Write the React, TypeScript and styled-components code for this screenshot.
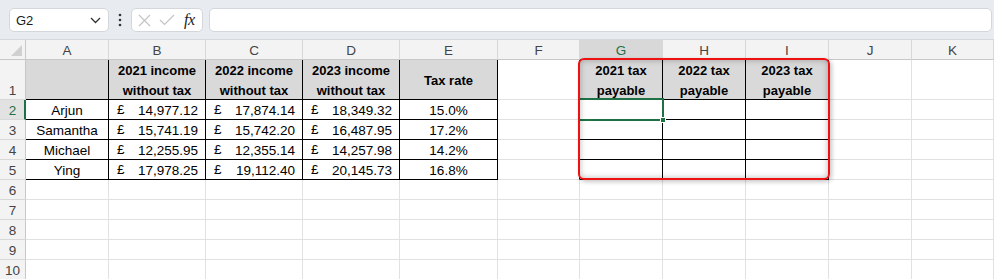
import React from 'react';
import styled, { createGlobalStyle } from 'styled-components';

const GlobalStyle = createGlobalStyle`
  html, body { margin: 0; padding: 0; background: #ffffff; }
  body { font-family: "Liberation Sans", Arial, sans-serif; overflow: hidden; }
  * { box-sizing: border-box; }
`;

const GREEN = '#1e7145';
const GRID = '#e1e1e1';
const BLACK = '#000000';

const Page = styled.div`
  width: 994px;
  height: 279px;
  overflow: hidden;
  display: flex;
  flex-direction: column;
`;

const Toolbar = styled.div`
  height: 40px;
  flex: none;
  background: #e8ecf0;
  border-bottom: 1px solid #d6d9dc;
  display: flex;
  align-items: flex-start;
  padding: 8px 2px 0 9px;
`;

const NameBox = styled.div`
  width: 100px;
  height: 24px;
  background: #ffffff;
  border: 1px solid #d3d7db;
  border-radius: 5px;
  display: flex;
  align-items: center;
  justify-content: space-between;
  padding: 0 7px 0 6px;
  font-size: 13px;
  color: #1a1a1a;
`;

const Dots = styled.div`
  width: 22px;
  height: 24px;
  display: flex;
  align-items: center;
  justify-content: center;
`;

const FxBox = styled.div`
  width: 72px;
  height: 24px;
  background: #ffffff;
  border: 1px solid #d3d7db;
  border-radius: 5px;
  display: flex;
  align-items: center;
  padding: 0 4px 0 6px;
  gap: 8px;
`;

const FxText = styled.span`
  font-family: "Liberation Serif", "Times New Roman", serif;
  font-style: italic;
  font-size: 16px;
  color: #222;
  letter-spacing: -0.5px;
  margin-left: 1px;
`;

const FormulaInput = styled.div`
  flex: 1;
  margin-left: 6px;
  height: 24px;
  background: #ffffff;
  border: 1px solid #d3d7db;
  border-radius: 5px;
`;

const SheetWrap = styled.div`
  position: relative;
  flex: 1;
`;

const Sheet = styled.div`
  display: grid;
  grid-template-columns: 26px 83px 97px 97px 97px 98px 82px 83px 83px 83px 83px 82px;
  grid-template-rows: 20px 40px repeat(9, 20px);
`;

const Corner = styled.div`
  background: #f3f3f3;
  border-right: 1px solid #c8c8c8;
  border-bottom: 1px solid #c8c8c8;
  position: relative;
`;

const CornerTriangle = styled.div`
  position: absolute;
  right: 3px;
  bottom: 3px;
  width: 0;
  height: 0;
  border-left: 11px solid transparent;
  border-bottom: 11px solid #d0d0d0;
`;

const ColHead = styled.div<{ $sel?: boolean }>`
  background: ${p => (p.$sel ? '#d8d8d8' : '#f3f3f3')};
  border-right: 1px solid #d8d8d8;
  border-bottom: 1px solid ${p => (p.$sel ? GREEN : '#c8c8c8')};
  color: ${p => (p.$sel ? GREEN : '#444')};
  font-size: 13.5px;
  display: flex;
  align-items: center;
  justify-content: center;
  padding-top: 1px;
`;

const RowHead = styled.div<{ $sel?: boolean; $bottomAlign?: boolean }>`
  background: ${p => (p.$sel ? '#e2e2e2' : '#f3f3f3')};
  border-bottom: 1px solid #d8d8d8;
  border-right: ${p => (p.$sel ? `2px solid ${GREEN}` : '1px solid #c8c8c8')};
  color: ${p => (p.$sel ? GREEN : '#444')};
  font-size: 13.5px;
  display: flex;
  align-items: ${p => (p.$bottomAlign ? 'flex-end' : 'center')};
  justify-content: center;
  padding-top: ${p => (p.$bottomAlign ? '0' : '2px')};
  padding-bottom: ${p => (p.$bottomAlign ? '1px' : '0')};
  padding-left: ${p => (p.$sel ? '1px' : '0')};
`;

const Cell = styled.div<{
  $right: string;
  $bottom: string;
  $bg?: string;
  $bold?: boolean;
}>`
  position: relative;
  background: ${p => p.$bg || '#ffffff'};
  border-right: 1px solid ${p => p.$right};
  border-bottom: 1px solid ${p => p.$bottom};
  font-size: ${p => (p.$bold ? '13px' : '13.5px')};
  font-weight: ${p => (p.$bold ? 700 : 400)};
  color: #000;
  display: flex;
  flex-direction: column;
  align-items: center;
  justify-content: center;
  text-align: center;
  line-height: 20px;
  padding-top: 2px;
  white-space: nowrap;
`;

const Money = styled.div`
  width: 100%;
  display: flex;
  justify-content: space-between;
  padding: 0 7px 0 8px;
`;

const Pound = styled.span`
  position: relative;
  top: -1px;
`;

const Selection = styled.div`
  position: absolute;
  left: -2px;
  top: -2px;
  right: -2px;
  bottom: -2px;
  border: 2px solid ${GREEN};
  pointer-events: none;
  z-index: 2;
`;

const FillHandle = styled.div`
  position: absolute;
  right: -4px;
  bottom: -4px;
  width: 6px;
  height: 6px;
  background: ${GREEN};
  border: 1px solid #ffffff;
`;

const Highlight = styled.div`
  position: absolute;
  left: 578px;
  top: 18px;
  width: 252px;
  height: 122px;
  border: 2px solid #ee1111;
  border-radius: 6px;
  box-shadow: 2px 2px 4px rgba(0, 0, 0, 0.22), inset 0 0 6px rgba(0, 0, 0, 0.28);
  pointer-events: none;
  z-index: 3;
`;

const COLS = ['A', 'B', 'C', 'D', 'E', 'F', 'G', 'H', 'I', 'J', 'K'];

type Val = string | { money: string } | string[] | null;

const DATA: Record<number, Val[]> = {
  1: [
    '',
    ['2021 income', 'without tax'],
    ['2022 income', 'without tax'],
    ['2023 income', 'without tax'],
    'Tax rate',
    null,
    ['2021 tax', 'payable'],
    ['2022 tax', 'payable'],
    ['2023 tax', 'payable'],
  ],
  2: ['Arjun', { money: '14,977.12' }, { money: '17,874.14' }, { money: '18,349.32' }, '15.0%'],
  3: ['Samantha', { money: '15,741.19' }, { money: '15,742.20' }, { money: '16,487.95' }, '17.2%'],
  4: ['Michael', { money: '12,255.95' }, { money: '12,355.14' }, { money: '14,257.98' }, '14.2%'],
  5: ['Ying', { money: '17,978.25' }, { money: '19,112.40' }, { money: '20,145.73' }, '16.8%'],
};

function ChevronDown() {
  return (
    <svg width="11" height="7" viewBox="0 0 11 7">
      <path d="M1 1 L5.5 5.5 L10 1" fill="none" stroke="#333" strokeWidth="1.3" />
    </svg>
  );
}

function VDots() {
  return (
    <svg width="4" height="14" viewBox="0 0 4 14">
      <circle cx="2" cy="2" r="1.3" fill="#333" />
      <circle cx="2" cy="7" r="1.3" fill="#333" />
      <circle cx="2" cy="12" r="1.3" fill="#333" />
    </svg>
  );
}

function CancelIcon() {
  return (
    <svg width="13" height="13" viewBox="0 0 13 13">
      <path d="M1 1 L12 12 M12 1 L1 12" stroke="#c4c4c4" strokeWidth="1.2" fill="none" />
    </svg>
  );
}

function CheckIcon() {
  return (
    <svg width="16" height="12" viewBox="0 0 16 12">
      <path d="M1 6 L5.5 10.5 L15 1" stroke="#c4c4c4" strokeWidth="1.2" fill="none" />
    </svg>
  );
}

function renderValue(v: Val) {
  if (v === null || v === '') return null;
  if (typeof v === 'string') return <span>{v}</span>;
  if (Array.isArray(v)) return v.map((line, i) => <span key={i}>{line}</span>);
  return (
    <Money>
      <Pound>£</Pound>
      <span>{v.money}</span>
    </Money>
  );
}

export default function App() {
  const rows = [1, 2, 3, 4, 5, 6, 7, 8, 9, 10];
  return (
    <Page>
      <GlobalStyle />
      <Toolbar>
        <NameBox>
          <span>G2</span>
          <ChevronDown />
        </NameBox>
        <Dots>
          <VDots />
        </Dots>
        <FxBox>
          <CancelIcon />
          <CheckIcon />
          <FxText>fx</FxText>
        </FxBox>
        <FormulaInput />
      </Toolbar>
      <SheetWrap>
        <Sheet>
          <Corner>
            <CornerTriangle />
          </Corner>
          {COLS.map(c => (
            <ColHead key={c} $sel={c === 'G'}>
              {c}
            </ColHead>
          ))}
          {rows.map(r => (
            <React.Fragment key={r}>
              <RowHead $sel={r === 2} $bottomAlign={r === 1}>
                {r}
              </RowHead>
              {COLS.map((c, ci) => {
                const inT1 = r <= 5 && ci <= 4;
                const inT2 = r <= 5 && ci >= 6 && ci <= 8;
                const leftOfT2 = r <= 5 && ci === 5;
                const right = inT1 || inT2 || leftOfT2 ? BLACK : GRID;
                const bottom = inT1 || inT2 ? BLACK : GRID;
                const header = r === 1 && (inT1 || inT2);
                const v = (DATA[r] && DATA[r][ci]) ?? null;
                return (
                  <Cell
                    key={c}
                    $right={right}
                    $bottom={bottom}
                    $bg={header ? '#d9d9d9' : undefined}
                    $bold={header}
                  >
                    {renderValue(v)}
                    {r === 2 && c === 'G' && (
                      <Selection>
                        <FillHandle />
                      </Selection>
                    )}
                  </Cell>
                );
              })}
            </React.Fragment>
          ))}
        </Sheet>
        <Highlight />
      </SheetWrap>
    </Page>
  );
}
